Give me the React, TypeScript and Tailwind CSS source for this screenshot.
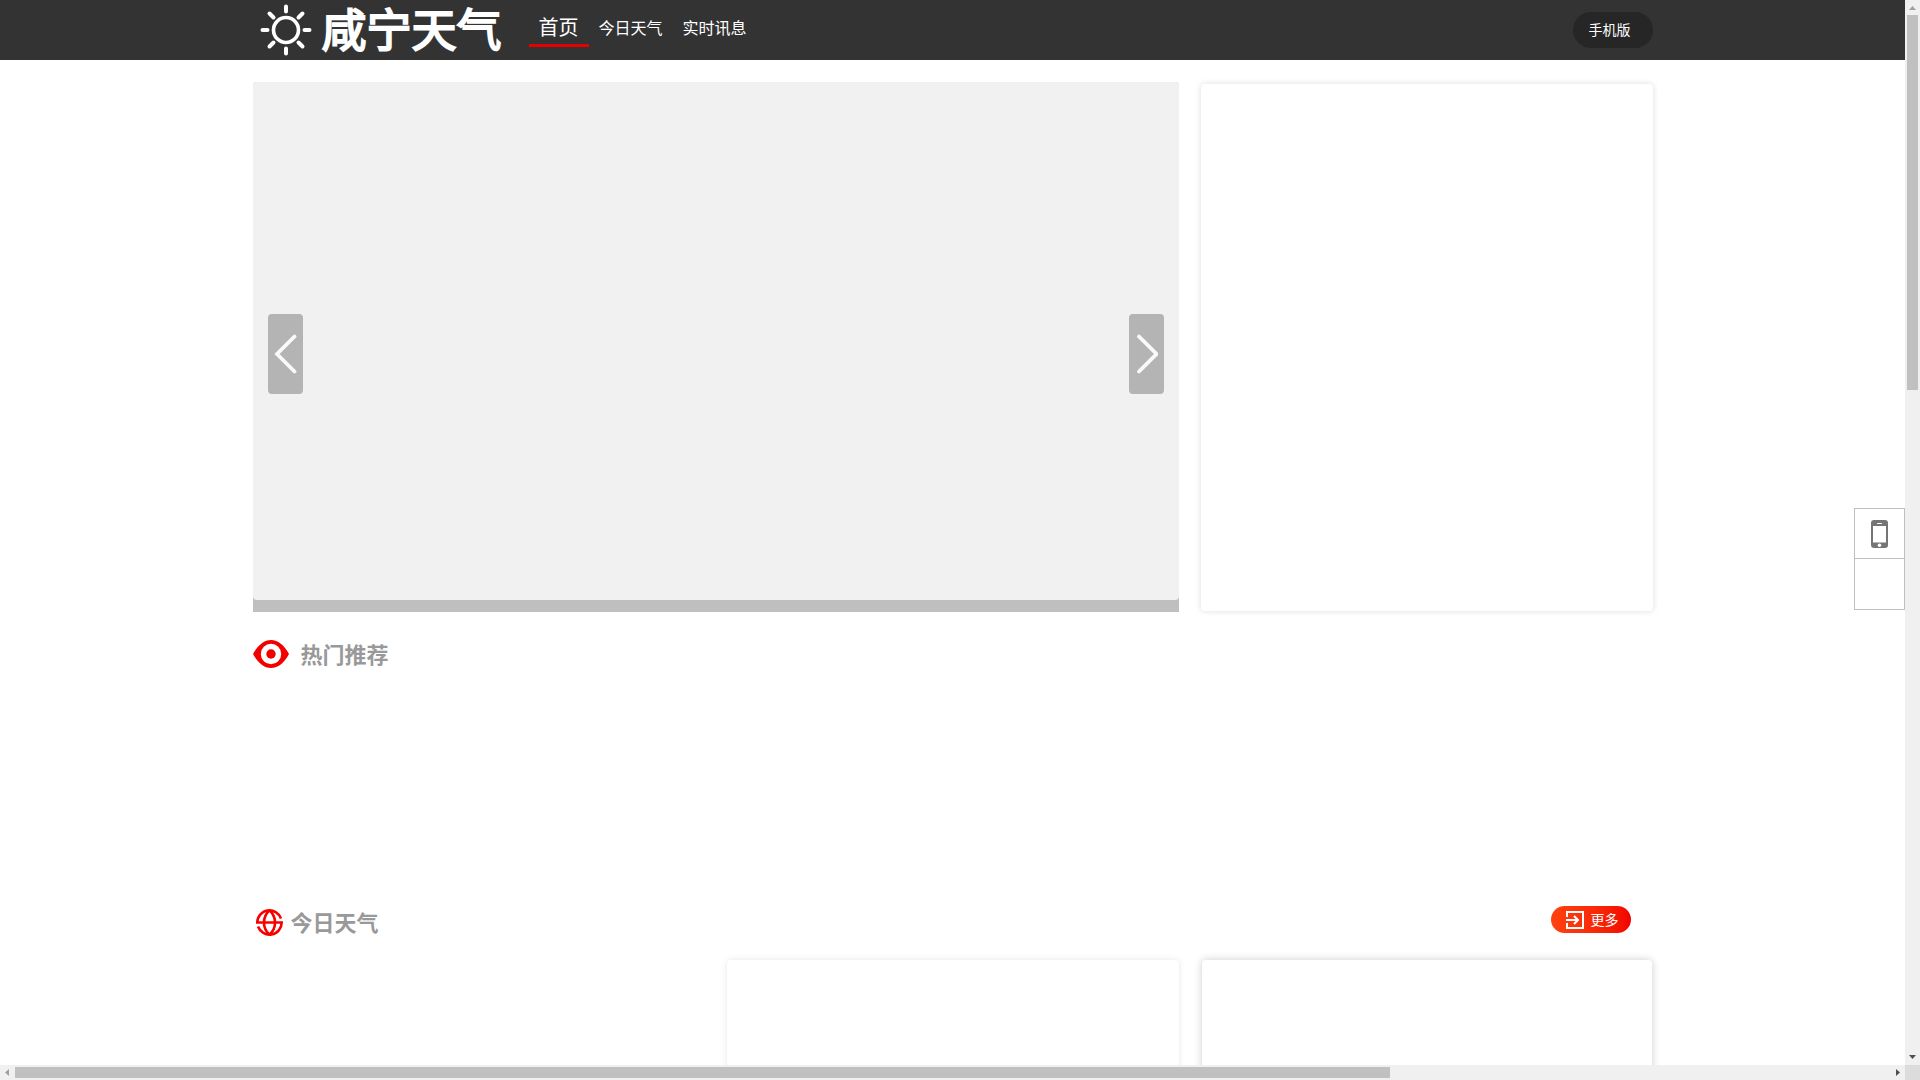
import type { ReactNode } from "react";
import clsx from "clsx";

const NAV_ITEMS = [
  { label: "首页", active: true },
  { label: "今日天气", active: false },
  { label: "实时讯息", active: false },
];

function SunLogo() {
  return (
    <svg viewBox="0 0 52 52" className="size-[52px]" fill="none" stroke="white" strokeLinecap="round">
      <circle cx="26" cy="26" r="12.5" strokeWidth="3.6" />
      <path
        strokeWidth="4"
        d="M26 2.5v5M26 44.5v5M2.500 26h5M44.5 26h5M9.5 9.5l4 4M38.5 38.5l4 4M9.5 42.5l4-4M38.5 13.5l4-4"
      />
    </svg>
  );
}

function EyeIcon() {
  return (
    <svg viewBox="0 0 36 28" className="h-7 w-9" fill="#f20000">
      <path
        fillRule="evenodd"
        d="M0 14C5 5 11 0 18 0s13 5 18 14c-5 9-11 14-18 14S5 23 0 14zM18 3.8a10.2 10.2 0 1 0 0 20.4 10.2 10.2 0 0 0 0-20.4z"
      />
      <circle cx="18" cy="14" r="4.7" />
    </svg>
  );
}

function GlobeIcon() {
  return (
    <svg viewBox="0 0 27 27" className="size-[27px]" fill="none" stroke="#f80000" strokeWidth="2.6">
      <path d="M25 9.5A12.2 12.2 0 0 0 1.3 13.5h24.4A12.2 12.2 0 0 1 2 17.5" />
      <path d="M13.5 1.3c-7.4 7-7.4 17.4 0 24.4M13.5 1.3c7.4 7 7.4 17.4 0 24.4" />
    </svg>
  );
}

function EnterIcon() {
  return (
    <svg viewBox="0 0 18 18" className="size-[18px]" fill="none" stroke="white" strokeWidth="2">
      <path d="M1 6V1h16v16H1v-5M0 9h12M8 5l4 4-4 4" />
    </svg>
  );
}

function PhoneIcon() {
  return (
    <svg viewBox="0 0 17 28" className="h-7 w-[17px]">
      <rect width="17" height="28" rx="3" fill="#757575" />
      <rect x="2" y="6" width="13" height="16.5" fill="white" />
      <rect x="6" y="3" width="5" height="1" rx="0.5" fill="white" />
      <circle cx="8.5" cy="25.2" r="1.8" fill="white" />
    </svg>
  );
}

function ArrowButton({ dir }: { dir: "prev" | "next" }) {
  return (
    <button
      type="button"
      aria-label={dir === "prev" ? "上一张" : "下一张"}
      className="flex h-20 w-[35px] items-center justify-center rounded bg-[#b4b4b4]"
    >
      <svg viewBox="0 0 23 40" className="h-10 w-[23px]" fill="none" stroke="#fafafa" strokeWidth="3.8" strokeLinecap="round">
        <path d={dir === "prev" ? "M20.5 2.5L3 20l17.5 17.5" : "M4 2.5L21.5 20 4 37.5"} />
      </svg>
    </button>
  );
}

function SectionTitle({ icon, children }: { icon: ReactNode; children: ReactNode }) {
  return (
    <h2 className="flex h-8 items-center text-[22px] leading-8 font-bold text-[#999]">
      {icon}
      <span className="pt-[3px]">{children}</span>
    </h2>
  );
}

function Header() {
  return (
    <header className="h-[60px] shrink-0 bg-[#333]">
      <div className="mx-auto flex h-full w-full max-w-[1400px] items-center">
        <a href="#" className="flex w-[276px] items-center gap-[10px] pl-[7px] text-white">
          <SunLogo />
          <span className="pt-[3px] text-[45px] leading-[60px] font-normal whitespace-nowrap [-webkit-text-stroke:2px_white] [stroke-linejoin:round]">
            咸宁天气
          </span>
        </a>
        <nav className="flex h-full items-start pt-[11px]">
          {NAV_ITEMS.map((item) => (
            <a
              key={item.label}
              href="#"
              className={clsx(
                "px-[10px] text-white",
                item.active ? "h-9 border-b-3 border-[#e60000] text-xl leading-[34px]" : "text-base leading-[36px]",
              )}
            >
              {item.label}
            </a>
          ))}
        </nav>
        <button
          type="button"
          className="ml-auto h-9 w-20 rounded-full bg-[#262626] pl-4 text-left text-sm text-white"
        >
          手机版
        </button>
      </div>
    </header>
  );
}

function VerticalScrollbar() {
  return (
    <div className="flex w-[15px] shrink-0 flex-col items-center bg-[#f0f0f0]">
      <svg viewBox="0 0 15 15" className="size-[15px]" fill="#a0a0a0">
        <path d="M4 10h7L7.5 6z" />
      </svg>
      <div className="h-[375px] w-[11px] bg-[#c0c0c0]" />
      <svg viewBox="0 0 15 15" className="mt-auto size-[15px]" fill="#505050">
        <path d="M4 5h7L7.5 9z" />
      </svg>
    </div>
  );
}

function HorizontalScrollbar() {
  return (
    <div className="flex h-[15px] shrink-0">
      <div className="flex flex-1 items-center bg-[#f0f0f0]">
        <svg viewBox="0 0 15 15" className="size-[15px]" fill="#a0a0a0">
          <path d="M9 4v7L5 7.5z" />
        </svg>
        <div className="flex-1">
          <div className="h-[11px] w-11/15 bg-[#c0c0c0]" />
        </div>
        <svg viewBox="0 0 15 15" className="size-[15px]" fill="#505050">
          <path d="M6 4v7l4-3.5z" />
        </svg>
      </div>
      <div className="w-[15px] bg-[#dcdcdc]" />
    </div>
  );
}

export default function App() {
  return (
    <div className="flex h-screen flex-col bg-white font-['Liberation_Sans','Noto_Sans_CJK_SC',sans-serif]">
      <div className="flex min-h-0 flex-1">
        <div className="relative flex min-w-0 flex-1 flex-col overflow-hidden">
          <Header />

          <main className="mx-auto w-full max-w-[1400px] pt-[22px]">
            {/* Carousel + side card */}
            <div className="flex gap-[22px]">
              <div className="h-[530px] flex-1 rounded-t bg-[#bfbfbf]">
                <div className="flex h-[518px] items-center justify-between rounded bg-[#f1f1f1] px-[15px] pt-[26px]">
                  <ArrowButton dir="prev" />
                  <ArrowButton dir="next" />
                </div>
              </div>
              <div className="mt-[2px] h-[527px] w-[452px] rounded shadow-[0_0_6px_rgba(0,0,0,0.14)]" />
            </div>

            <section className="h-[266px] pt-[26px]">
              <SectionTitle icon={<span className="mr-3"><EyeIcon /></span>}>热门推荐</SectionTitle>
            </section>

            <section className="pt-7">
              <div className="flex h-[54px] items-start justify-between pr-[22px]">
                <SectionTitle icon={<span className="mr-2 ml-[3px]"><GlobeIcon /></span>}>今日天气</SectionTitle>
                <button
                  type="button"
                  className="flex h-[27px] w-20 items-center gap-[7px] rounded-full bg-linear-to-r from-[#ff4110] to-[#f20000] pl-[15px] text-sm text-white"
                >
                  <EnterIcon />
                  更多
                </button>
              </div>
              <div className="grid h-[320px] grid-cols-3 gap-[22px]">
                <div />
                <div className="rounded shadow-[0_0_6px_rgba(0,0,0,0.1)]" />
                <div className="mx-px rounded shadow-[0_0_8px_rgba(0,0,0,0.2)]" />
              </div>
            </section>
          </main>

          {/* Floating tools */}
          <aside className="absolute top-[508px] right-0 w-[51px] divide-y divide-[#bfbfbf] border border-[#bfbfbf] bg-white">
            <button type="button" aria-label="手机版" className="flex h-[50px] w-full items-center justify-center">
              <PhoneIcon />
            </button>
            <div className="h-[50px]" />
          </aside>
        </div>
        <VerticalScrollbar />
      </div>
      <HorizontalScrollbar />
    </div>
  );
}
